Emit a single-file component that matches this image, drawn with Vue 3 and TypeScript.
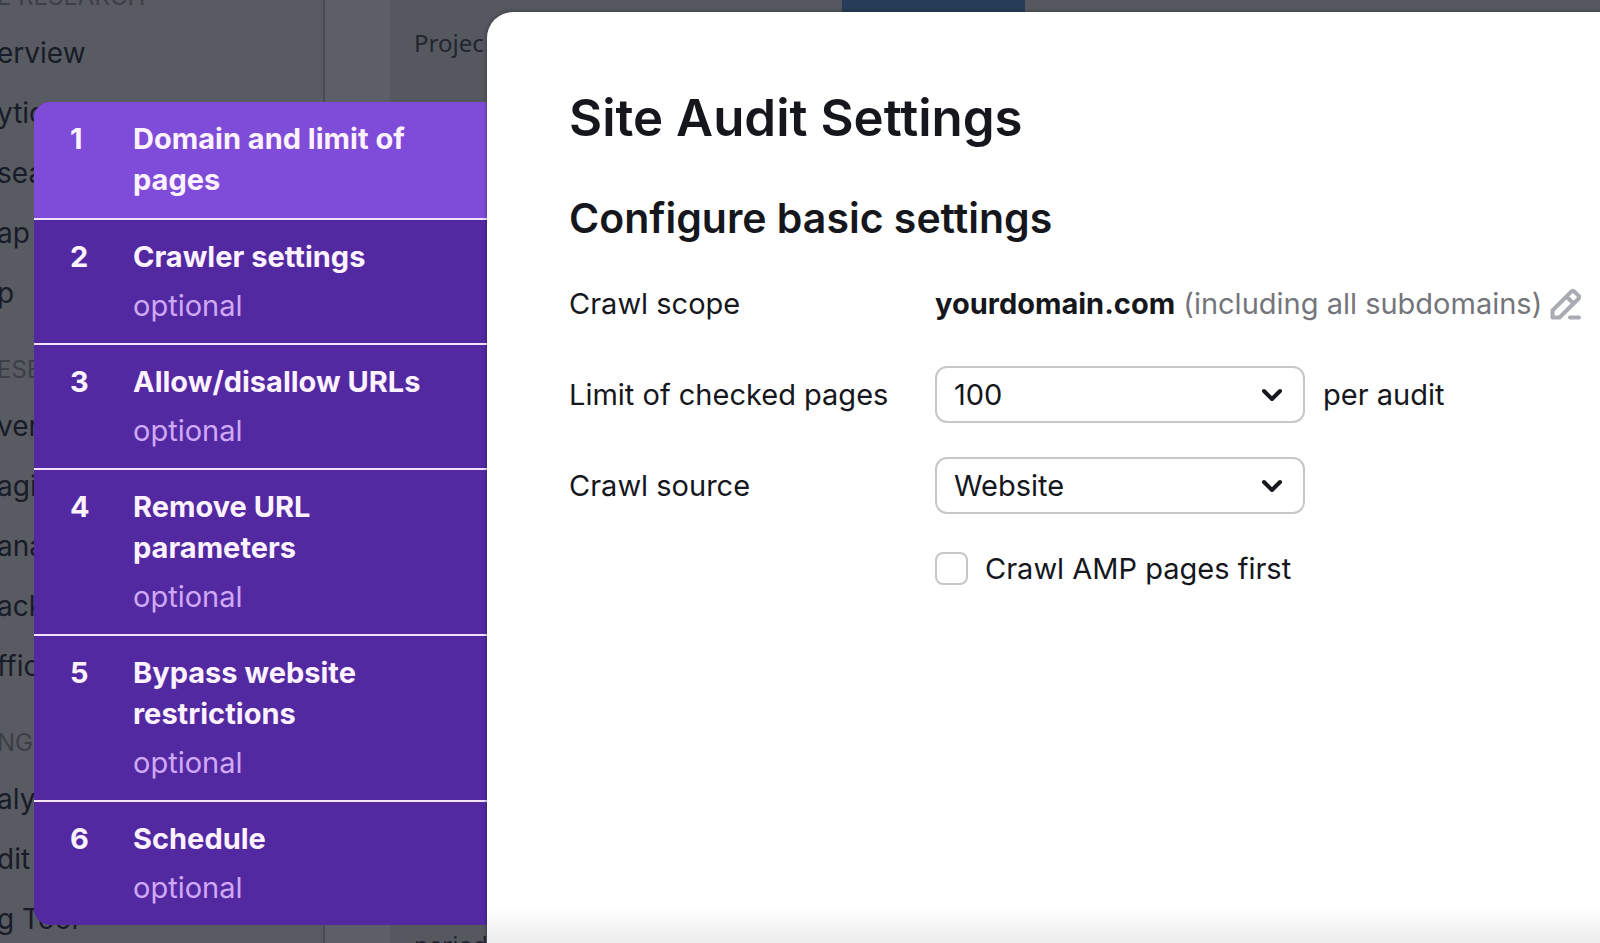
<script setup lang="ts">
import { ref } from 'vue'

interface NavGroup {
  heading: string
  items: string[]
}

interface Step {
  title: string
  optional: boolean
}

const navGroups: NavGroup[] = [
  { heading: 'E RESEARCH', items: ['erview', 'ytic', 'sea', 'ap', 'p'] },
  { heading: 'ESE', items: ['ver', 'agi', 'ana', 'ack', 'ffic'] },
  { heading: 'NG', items: ['aly', 'dit', 'g Tool'] },
]

const steps: Step[] = [
  { title: 'Domain and limit of pages', optional: false },
  { title: 'Crawler settings', optional: true },
  { title: 'Allow/disallow URLs', optional: true },
  { title: 'Remove URL parameters', optional: true },
  { title: 'Bypass website restrictions', optional: true },
  { title: 'Schedule', optional: true },
]

const activeStep = ref(0)
const pageLimit = ref('100')
const crawlSource = ref('Website')
const ampFirst = ref(false)
</script>

<template>
  <div class="app">
    <div class="page">
      <nav class="sidebar" aria-label="Tools">
        <section v-for="group in navGroups" :key="group.heading" class="nav-group">
          <h3 class="nav-heading">{{ group.heading }}</h3>
          <a v-for="item in group.items" :key="item" class="nav-link" href="#">{{ item }}</a>
        </section>
      </nav>
      <div class="content">
        <div class="report">
          <div class="tabs"><span class="tab-active"></span></div>
          <span class="report-label">Projec</span>
          <span class="report-foot">period</span>
        </div>
      </div>
    </div>

    <div class="overlay">
      <ol class="steps">
        <li v-for="(step, index) in steps" :key="step.title" class="step-item">
          <button
            type="button"
            class="step"
            :class="{ active: index === activeStep }"
            @click="activeStep = index"
          >
            <span class="step-number">{{ index + 1 }}</span>
            <span class="step-text">
              <span class="step-title">{{ step.title }}</span>
              <span v-if="step.optional" class="step-note">optional</span>
            </span>
          </button>
        </li>
      </ol>

      <main class="dialog" role="dialog" aria-labelledby="dialog-title">
        <h1 id="dialog-title" class="title">Site Audit Settings</h1>
        <h2 class="subtitle">Configure basic settings</h2>
        <form class="form" @submit.prevent>
          <span class="label">Crawl scope</span>
          <div class="field">
            <span class="scope"><b class="domain">yourdomain.com</b> (including all subdomains)</span>
            <button type="button" class="edit" aria-label="Edit crawl scope">
              <svg width="32" height="32" viewBox="0 0 32 32" fill="none" stroke="#a9abb2" stroke-width="4" stroke-linejoin="round">
                <path d="M2.500 29.500V22.500L21 3.800Q22.800 2 24.600 3.800L28.200 7.400Q30 9.200 28.200 11L9.500 29.500Z" />
                <path d="M16.500 8.500L23.500 15.500" />
                <path d="M20 29.500H29" stroke-linecap="round" />
              </svg>
            </button>
          </div>

          <label class="label" for="limit">Limit of checked pages</label>
          <div class="field">
            <span class="select-wrap">
              <select id="limit" v-model="pageLimit" class="select">
                <option>100</option>
              </select>
              <svg class="chevron" width="22" height="14" viewBox="0 0 22 14" fill="none" stroke="#15181f" stroke-width="4" stroke-linecap="round" stroke-linejoin="round">
                <path d="M3 3L11 11L19 3" />
              </svg>
            </span>
            <span class="suffix">per audit</span>
          </div>

          <label class="label" for="source">Crawl source</label>
          <div class="field">
            <span class="select-wrap">
              <select id="source" v-model="crawlSource" class="select">
                <option>Website</option>
              </select>
              <svg class="chevron" width="22" height="14" viewBox="0 0 22 14" fill="none" stroke="#15181f" stroke-width="4" stroke-linecap="round" stroke-linejoin="round">
                <path d="M3 3L11 11L19 3" />
              </svg>
            </span>
          </div>

          <label class="check">
            <input v-model="ampFirst" type="checkbox" class="checkbox" />
            <span>Crawl AMP pages first</span>
          </label>
        </form>
      </main>
    </div>
  </div>
</template>

<style>
body {
  margin: 0;
}
</style>

<style scoped>
.app {
  position: relative;
  height: 100vh;
  overflow: hidden;
  background: #5a5d64;
  color: #15171c;
  font-family: Inter, "Liberation Sans", sans-serif;
  font-size: 29px;
  line-height: 41px;
}

.app *,
.app *::before {
  box-sizing: border-box;
}

.page {
  display: flex;
  height: 100%;
}

.sidebar {
  flex: none;
  width: 325px;
  height: 100%;
  overflow: hidden;
  border-right: 2px solid #4a4c55;
  background: #585b61;
}

.nav-group {
  margin-left: -3px;
}

.nav-group:first-child {
  margin-top: -50px;
}

.nav-heading {
  height: 73px;
  margin: 0;
  padding-top: 27px;
  color: #3c3f49;
  font-size: 24px;
  font-weight: 400;
  line-height: 40px;
}

.nav-link {
  display: block;
  color: #181b28;
  font-size: 28px;
  line-height: 60px;
  text-decoration: none;
  white-space: nowrap;
}

.content {
  flex: 1;
  padding-left: 65px;
  background: #5c5f67;
}

.report {
  display: flex;
  flex-direction: column;
  height: 100%;
  background: #56585f;
}

.tabs {
  display: flex;
  height: 12px;
  padding-left: 452px;
}

.tab-active {
  width: 183px;
  background: #263c58;
}

.report-label,
.report-foot {
  padding-left: 24px;
  color: #22252f;
  font-family: "Noto Sans", sans-serif;
  font-size: 24px;
  line-height: 32px;
}

.report-label {
  margin-top: 15px;
}

.report-foot {
  margin-top: auto;
  margin-bottom: -18px;
}

.overlay {
  position: absolute;
  inset: 0;
  display: flex;
  align-items: flex-start;
  padding: 12px 0 0 34px;
}

.steps {
  flex: none;
  width: 453px;
  margin: 90px 0 0;
  padding: 0;
  overflow: hidden;
  border-radius: 16px 0 0 16px;
  background: #5329a2;
  list-style: none;
}

.step-item + .step-item {
  border-top: 2px solid #f3e2ff;
}

.step {
  display: flex;
  width: 100%;
  padding: 16px 32px 17px 36px;
  border: 0;
  background: transparent;
  color: #fdf2ff;
  font: inherit;
  text-align: left;
}

.step.active {
  padding-bottom: 18px;
  background: #7f4cd9;
}

.step-number,
.step-title {
  font-weight: 700;
}

.step-number {
  flex: none;
  width: 63px;
}

.step-text {
  display: flex;
  flex-direction: column;
  gap: 8px;
}

.step-note {
  color: #cfa9f7;
}

.dialog {
  flex: 1;
  align-self: stretch;
  padding: 76px 16px 0 82px;
  border-top-left-radius: 26px;
  background: linear-gradient(to top, #ececec, #ffffff 36px);
  box-shadow: 0 0 4px rgba(20, 20, 30, 0.5);
}

.title {
  margin: 0;
  font-size: 51px;
  font-weight: 600;
  line-height: 60px;
}

.subtitle {
  margin: 46px 0 0;
  font-size: 41px;
  font-weight: 600;
  line-height: 48px;
}

.form {
  display: grid;
  grid-template-columns: 366px 1fr;
  row-gap: 34px;
  margin-top: 33px;
}

.label {
  line-height: 57px;
}

.field {
  display: flex;
  align-items: center;
  height: 57px;
  white-space: nowrap;
}

.scope {
  color: #74757b;
}

.domain {
  color: #15171c;
  font-weight: 700;
}

.edit {
  display: flex;
  margin-left: 8px;
  padding: 0;
  border: 0;
  background: none;
}

.select-wrap {
  display: grid;
  align-items: center;
  width: 370px;
}

.select {
  grid-area: 1 / 1;
  height: 57px;
  padding: 0 52px 0 17px;
  border: 2px solid #c6c7cb;
  border-radius: 12px;
  appearance: none;
  background: #ffffff;
  color: inherit;
  font: inherit;
}

.chevron {
  grid-area: 1 / 1;
  justify-self: end;
  margin-right: 22px;
  pointer-events: none;
}

.suffix {
  margin-left: 18px;
}

.check {
  display: flex;
  grid-column: 2;
  align-items: center;
  gap: 17px;
}

.checkbox {
  width: 33px;
  height: 33px;
  margin: 0;
  border: 2px solid #c6c7cb;
  border-radius: 8px;
  appearance: none;
  background: #ffffff;
}

.checkbox:checked {
  background: #5329a2;
}
</style>
